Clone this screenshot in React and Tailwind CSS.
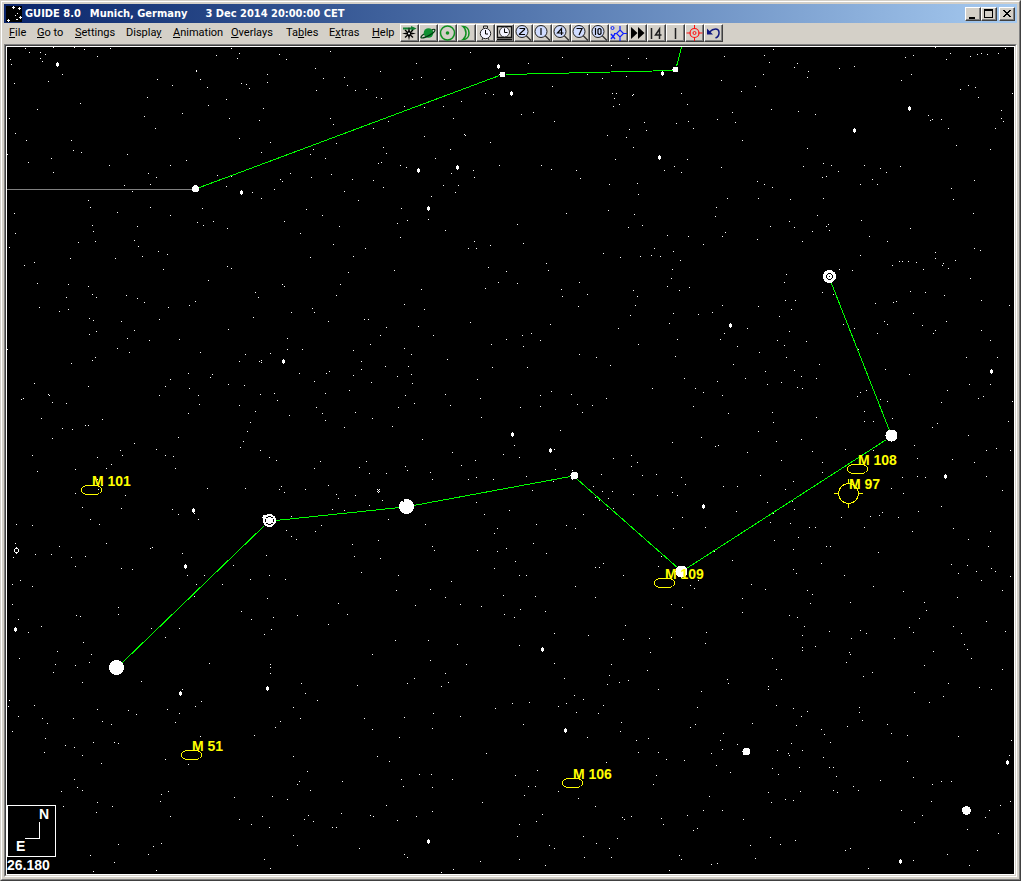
import React from "react";

const MENUS = [
  { pre: "", key: "F", post: "ile", w: "w-[28px]" },
  { pre: "", key: "G", post: "o to", w: "w-[38px]" },
  { pre: "", key: "S", post: "ettings", w: "w-[51px]" },
  { pre: "Displa", key: "y", post: "", w: "w-[47px]" },
  { pre: "", key: "A", post: "nimation", w: "w-[58px]" },
  { pre: "", key: "O", post: "verlays", w: "w-[55px]" },
  { pre: "Ta", key: "b", post: "les", w: "w-[43px]" },
  { pre: "E", key: "x", post: "tras", w: "w-[43px]" },
  { pre: "", key: "H", post: "elp", w: "w-[28px]" },
];

function Lens({ children }) {
  return (
    <>
      <path d="M12 11.500l5 5" stroke="#303030" strokeWidth="1.300" />
      <circle cx="8" cy="7.500" r="6" fill="#d0dcff" stroke="#202020" />
      <g fill="none" stroke="#000" strokeWidth="1.200">{children}</g>
    </>
  );
}

const TOOLS = [
  {
    name: "Horizon view",
    art: (
      <>
        <path d="M3 3.500h8V2l5.500 2.500-5 2.500V5.500H3z" fill="#108030" />
        <path d="M9 3l1.200 5.300L16 9.500l-5.800 1.200L9 16.500l-1.200-5.800L2 9.500l5.800-1.200z" fill="#000" />
        <path d="M5 6l8 7.500M13 6l-8 7.500" stroke="#000" fill="none" strokeWidth="1.300" />
        <circle cx="9" cy="9.500" r="1" fill="#fff" />
      </>
    ),
  },
  {
    name: "Planets",
    art: (
      <>
        <circle cx="9.500" cy="9" r="4.800" fill="#109030" />
        <path d="M5 10c-3 2-4 4-2 4 3 0 13-5 13-8 0-1-2-1-3 0" fill="none" stroke="#003810" strokeWidth="1.200" />
      </>
    ),
  },
  {
    name: "Sun",
    art: (
      <>
        <circle cx="9.500" cy="9" r="7" fill="none" stroke="#109020" strokeWidth="1.500" />
        <circle cx="9.500" cy="9" r="1.800" fill="#109020" />
      </>
    ),
  },
  {
    name: "Moon",
    art: <path d="M6 2.500c8 0 8 13 0 13 4-3 4-10 0-13z" fill="none" stroke="#109020" strokeWidth="1.500" />,
  },
  {
    name: "Set time",
    art: (
      <>
        <path d="M7.500 4V2h4v2M6 16l1-2M13 16l-1-2" fill="none" stroke="#202020" />
        <circle cx="9.500" cy="9.500" r="5.200" fill="#f4f4ff" stroke="#202020" />
        <path d="M9.500 6v4h2.500" fill="none" stroke="#000" />
      </>
    ),
  },
  {
    name: "Real time",
    art: (
      <>
        <path d="M2.500 2.500h14v11h-14zM2 15.500h15" fill="none" stroke="#101010" strokeWidth="1.300" />
        <circle cx="9.500" cy="8" r="5" fill="#f4f4ff" stroke="#303030" />
        <path d="M9.500 4.500v4h3" fill="none" stroke="#000" />
      </>
    ),
  },
  { name: "Zoom level 2", art: <Lens><path d="M5.500 4.500h5v1l-5 4.500v.5h5.500" /></Lens> },
  { name: "Zoom level 1", art: <Lens><path d="M8 4v7" /></Lens> },
  { name: "Zoom level 4", art: <Lens><path d="M9.500 11V4.500L5.500 9h6" /></Lens> },
  { name: "Zoom level 7", art: <Lens><path d="M5.500 4.500h5.500L8 11" /></Lens> },
  { name: "Zoom level 10", art: <Lens><path d="M5.500 4v7M8 5.500l1-1h1l1 1v4l-1 1H9l-1-1z" /></Lens> },
  {
    name: "Mark stars",
    art: (
      <g fill="none" stroke="#1020ff">
        <circle cx="3.500" cy="4" r="1.500" />
        <path d="M2 10l4 5M6 10l-4 5" strokeWidth="1.400" />
        <path d="M11 2v4M11 13v4M5 9.500h3M14 9.500h4M11 6l3.500 3.500L11 13 7.500 9.500z" strokeWidth="1.200" />
      </g>
    ),
  },
  { name: "Fast forward", art: <path d="M3 3l6.500 6L3 15zM10 3l6.500 6-6.500 6z" fill="#000" /> },
  { name: "Magnitude 14", art: <path d="M4.500 4v11M12.500 15V5L8.500 11h6" fill="none" stroke="#202020" strokeWidth="1.500" /> },
  { name: "Magnitude 1", art: <path d="M9.500 4v11" fill="none" stroke="#202020" strokeWidth="1.500" /> },
  {
    name: "Centre on target",
    art: (
      <g fill="none" stroke="#ff1010">
        <circle cx="9.500" cy="9" r="4.500" strokeWidth="1.200" />
        <circle cx="9.500" cy="9" r="1.500" />
        <path d="M9.500 1v4M9.500 13v4M1.500 9h4M13.500 9h4" />
      </g>
    ),
  },
  {
    name: "Undo",
    art: (
      <>
        <path d="M5.500 8c4-4 9-4 9.500 0 .3 3-1 5-3.500 6" fill="none" stroke="#101880" strokeWidth="1.500" />
        <path d="M3 4.500v6h6z" fill="#101880" />
      </>
    ),
  },
];

const BEVEL =
  "border border-t-white border-l-white border-r-[#404040] border-b-[#404040] bg-[#d4d0c8] shadow-[inset_-1px_-1px_0_#808080]";

// Constellation segments: x1, y1, x2, y2
const LINES = [
  [199, 187, 499, 75],
  [506, 74, 673, 70],
  [676, 66, 681, 47],
  [831, 283, 889, 430],
  [886, 439, 686, 568],
  [678, 568, 577, 479],
  [570, 476, 413, 505],
  [399, 507, 275, 520],
  [264, 525, 122, 662],
];

// Bright stars: x, y, radius
const BRIGHT = [
  [195, 188, 3.5], [502, 74, 3], [675, 69, 3], [574, 475, 4], [406, 506, 7.5],
  [116, 667, 7.5], [681, 571, 6], [891, 435, 6], [746, 751, 4], [966, 810, 4.5],
  [829, 276, 6.5], [269, 520, 6.5], [265, 517, 3],
];

const MEDIUM = [
  [57, 64], [241, 192], [418, 170], [457, 167], [428, 208], [511, 93], [498, 66], [662, 73],
  [659, 157], [909, 108], [854, 130], [730, 325], [283, 361], [991, 371], [512, 434],
  [550, 450], [703, 506], [945, 476], [193, 510], [185, 566], [15, 629], [542, 649],
  [267, 688], [180, 693], [565, 730], [1007, 762], [428, 841], [900, 861],
];

const GALAXIES = [
  { label: "M 101", x: 91, y: 490 },
  { label: "M 108", x: 857, y: 469 },
  { label: "M 109", x: 664, y: 583 },
  { label: "M 51", x: 191, y: 755 },
  { label: "M 106", x: 572, y: 783 },
];

const FAINT = [
  [25, 48], [29, 52], [40, 52], [45, 54], [40, 58], [74, 47], [231, 48], [279, 54], [286, 59], [330, 51],
  [935, 47], [950, 53], [977, 54], [987, 54], [1005, 48], [946, 59], [864, 421], [873, 421], [937, 423],
  [932, 427], [801, 439], [914, 445], [781, 460], [812, 451], [822, 462], [822, 472], [845, 449], [873, 450],
  [917, 458], [917, 476], [925, 477], [902, 477], [793, 481], [785, 489], [891, 488], [903, 493],
  [792, 501], [794, 509], [841, 517], [870, 516], [879, 515], [882, 512], [898, 517], [918, 511],
  [931, 801], [901, 810], [922, 815], [914, 822], [1010, 801], [1000, 805], [989, 810], [985, 817],
  [967, 829], [998, 833], [977, 850], [947, 854], [913, 860], [969, 865],
];

function faintStars(count) {
  let seed = 20141203;
  const next = () => {
    seed = (seed * 1664525 + 1013904223) % 4294967296;
    return seed / 4294967296;
  };
  const points = [];
  while (points.length < count) {
    const x = 7 + Math.floor(next() * 1006);
    const y = 47 + Math.floor(next() * 826);
    const compass = x < 60 && y > 800;
    const detail = (x > 780 && x < 940 && y > 420 && y < 520) || (x > 900 && y > 790);
    if (!compass && !detail) points.push([x, y]);
  }
  return points;
}

const FAINT_PATH = [...FAINT, ...faintStars(1220)].map(([x, y]) => `M${x} ${y}h1v1h-1z`).join("");

function SkyChart() {
  return (
    <svg
      viewBox="7 47 1007 827"
      className="block h-auto w-full bg-black"
      role="img"
      aria-label="Star chart"
      shapeRendering="crispEdges"
    >
      <path d={FAINT_PATH} fill="#fff" />
      <path d="M7 189.500H192" stroke="#808080" fill="none" />
      <g stroke="#00ff00">
        {LINES.map(([x1, y1, x2, y2]) => (
          <line key={`${x1}-${y1}`} x1={x1 + 0.5} y1={y1 + 0.5} x2={x2 + 0.5} y2={y2 + 0.5} />
        ))}
      </g>
      <g fill="#fff">
        {BRIGHT.map(([x, y, r]) => (
          <circle key={`${x}-${y}`} cx={x + 0.5} cy={y + 0.5} r={r} />
        ))}
        {MEDIUM.map(([x, y]) => (
          <path key={`${x}-${y}`} d={`M${x - 1} ${y - 1}h1v-1h1v1h1v3h-1v1h-1v-1h-1z`} />
        ))}
      </g>
      <g fill="none" stroke="#000">
        <path d="M828 273.500h3M828 279.500h3M826.500 275v3M832.500 275v3M827 274.500h1M831 274.500h1M827 278.500h1M831 278.500h1M829 276.500h1" />
        <path d="M268 516.500h3M268 524.500h3M265.500 519v3M273.500 519v3M266 517.500h2M271 517.500h2M266 523.500h2M271 523.500h2" />
        <path d="M402 500.500h2M403.500 499v3" />
      </g>
      <g fill="none" stroke="#fff">
        <path d="M15 548.500h3M15 552.500h3M14.500 549v3M18.500 549v3M16 547.500h1M16 553.500h1" />
        <path d="M377 489.500h1M379 489.500h1M378 490.500h1M377 491.500h1M379 491.500h1M378 492.500h1" />
      </g>
      <g fill="none" stroke="#ffff00">
        {GALAXIES.map(({ label, x, y }) => (
          <path key={label} d={`M${x - 9.5} ${y - 1.5}v3l2 2 3 1h10l3-1 2-2v-3l-2-2-3-1h-10l-3 1z`} />
        ))}
        <circle cx="848.500" cy="493.500" r="10" />
        <path d="M834 493.500h4M859 493.500h4M848.500 479v4M848.500 504v4" />
      </g>
      <g fill="#ffff00" className="font-['Liberation_Sans',sans-serif] text-[14px] font-bold">
        {GALAXIES.map(({ label, x, y }) => (
          <text key={label} x={x + 1} y={y - 4}>{label}</text>
        ))}
        <text x="849" y="489">M 97</text>
      </g>
      <path d="M7.500 805.500h48v51h-48zM39.500 822v16.500H25" fill="none" stroke="#fff" />
      <g fill="#fff" className="font-['Liberation_Sans',sans-serif] text-[14px] font-bold">
        <text x="39" y="819">N</text>
        <text x="16" y="851">E</text>
        <text x="7" y="870">26.180</text>
      </g>
    </svg>
  );
}

function WindowButton({ label, children }) {
  return (
    <button type="button" aria-label={label} className={`h-[14px] w-4 ${BEVEL}`}>
      <svg viewBox="0 0 14 12" className="block h-3 w-[14px]" shapeRendering="crispEdges">
        {children}
      </svg>
    </button>
  );
}

export default function App() {
  return (
    <div className="border border-t-[#d4d0c8] border-l-[#d4d0c8] border-r-[#404040] border-b-[#404040]">
      <div className="border border-t-white border-l-white border-r-[#808080] border-b-[#808080] bg-[#d4d0c8] p-0.5 font-['Roboto',sans-serif] text-[11px] text-black">
        <header className="flex h-[19px] items-center bg-linear-to-r from-[#0a246a] to-[#a6caf0] px-0.5">
          <svg viewBox="0 0 16 16" className="mr-[3px] h-4 w-4 bg-black" shapeRendering="crispEdges">
            <path
              d="M7 0h1v3h-1zM6 1h3v1h-3zM13 1h1v3h-1zM12 2h3v1h-3zM11 7h1v1h-1zM9 9h1v1h-1zM13 11h3v1h-3zM14 10h1v3h-1zM2 13h1v3h-1zM1 14h3v1h-3zM10 13h2v1h-2z"
              fill="#fff"
            />
          </svg>
          <h1 className="flex flex-1 gap-[9px] font-['DejaVu_Sans_Condensed','DejaVu_Sans',sans-serif] text-[11px] leading-4 font-bold whitespace-nowrap text-white">
            <span>GUIDE 8.0</span>
            <span>Munich, Germany</span>
            <span className="pl-[9px]">3 Dec 2014 20:00:00 CET</span>
          </h1>
          <div className="flex">
            <WindowButton label="Minimize">
              <path d="M3 9h6v2H3z" />
            </WindowButton>
            <WindowButton label="Maximize">
              <path d="M2 1h9v9H2zM3 3v6h7V3z" fillRule="evenodd" />
            </WindowButton>
            <span className="w-0.5" />
            <WindowButton label="Close">
              <path d="M3 2h2v1h1v1h2V3h1V2h2v1h-1v1H9v1H8v1h1v1h1v1h1v1H9V8H8V7H6v1H5v1H3V8h1V7h1V6h1V5H5V4H4V3H3z" />
            </WindowButton>
          </div>
        </header>

        <div className="flex h-[21px] items-start pt-px pl-[5px]">
          <nav aria-label="Main menu" className="flex h-[18px] items-center">
            {MENUS.map(({ pre, key, post, w }) => (
              <button key={pre + key + post} type="button" className={`${w} text-left leading-4 whitespace-nowrap`}>
                {pre}
                <span className="underline underline-offset-1">{key}</span>
                {post}
              </button>
            ))}
          </nav>
          <div role="toolbar" aria-label="Tools" className="flex">
            {TOOLS.map(({ name, art }) => (
              <button key={name} type="button" aria-label={name} className={`h-[18px] w-[19px] ${BEVEL}`}>
                <svg viewBox="1 1 17 16" className="block h-4 w-[17px]">{art}</svg>
              </button>
            ))}
          </div>
        </div>

        <main className="border border-t-[#808080] border-l-[#808080] border-r-white border-b-white">
          <div className="border border-t-[#404040] border-l-[#404040] border-r-[#d4d0c8] border-b-[#d4d0c8]">
            <div className="border border-white">
              <SkyChart />
            </div>
          </div>
        </main>
      </div>
    </div>
  );
}
